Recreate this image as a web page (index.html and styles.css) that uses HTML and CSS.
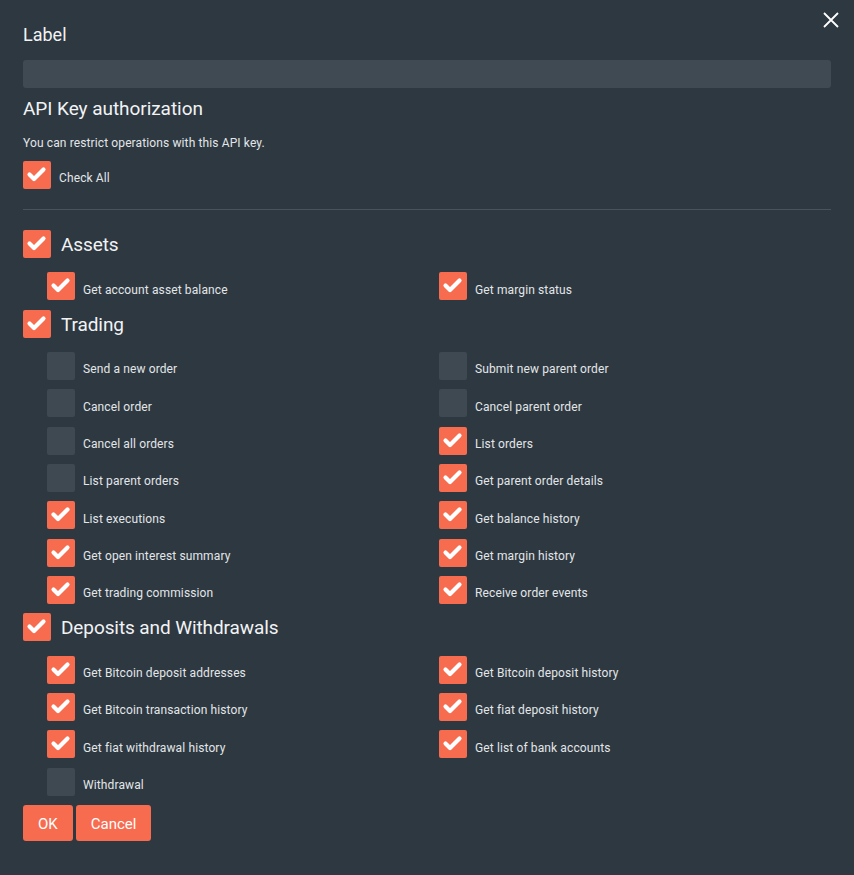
FILE: index.html
```html
<!DOCTYPE html>
<html>
<head>
<meta charset="utf-8">
<link rel="stylesheet" href="styles.css">
</head>
<body>
<div class="modal">
  <button class="close" aria-label="Close">
    <svg width="16" height="16" viewBox="0 0 16 16"><path d="M1 1 L15 15 M15 1 L1 15" stroke="#ffffff" stroke-width="1.8" fill="none"/></svg>
  </button>
  <div class="field-label">Label</div>
  <div class="input"></div>
  <h2 class="title">API Key authorization</h2>
  <p class="desc">You can restrict operations with this API key.</p>
  <label class="row check-all"><span class="box on"></span><span class="txt">Check All</span></label>
  <hr class="divider">

  <div class="section">
    <label class="row head"><span class="box on"></span><span class="htxt">Assets</span></label>
    <div class="items">
      <label class="row"><span class="box on"></span><span class="txt">Get account asset balance</span></label>
      <label class="row"><span class="box on"></span><span class="txt">Get margin status</span></label>
    </div>
  </div>

  <div class="section">
    <label class="row head"><span class="box on"></span><span class="htxt">Trading</span></label>
    <div class="items">
      <label class="row"><span class="box"></span><span class="txt">Send a new order</span></label>
      <label class="row"><span class="box"></span><span class="txt">Submit new parent order</span></label>
      <label class="row"><span class="box"></span><span class="txt">Cancel order</span></label>
      <label class="row"><span class="box"></span><span class="txt">Cancel parent order</span></label>
      <label class="row"><span class="box"></span><span class="txt">Cancel all orders</span></label>
      <label class="row"><span class="box on"></span><span class="txt">List orders</span></label>
      <label class="row"><span class="box"></span><span class="txt">List parent orders</span></label>
      <label class="row"><span class="box on"></span><span class="txt">Get parent order details</span></label>
      <label class="row"><span class="box on"></span><span class="txt">List executions</span></label>
      <label class="row"><span class="box on"></span><span class="txt">Get balance history</span></label>
      <label class="row"><span class="box on"></span><span class="txt">Get open interest summary</span></label>
      <label class="row"><span class="box on"></span><span class="txt">Get margin history</span></label>
      <label class="row"><span class="box on"></span><span class="txt">Get trading commission</span></label>
      <label class="row"><span class="box on"></span><span class="txt">Receive order events</span></label>
    </div>
  </div>

  <div class="section">
    <label class="row head"><span class="box on"></span><span class="htxt">Deposits and Withdrawals</span></label>
    <div class="items">
      <label class="row"><span class="box on"></span><span class="txt">Get Bitcoin deposit addresses</span></label>
      <label class="row"><span class="box on"></span><span class="txt">Get Bitcoin deposit history</span></label>
      <label class="row"><span class="box on"></span><span class="txt">Get Bitcoin transaction history</span></label>
      <label class="row"><span class="box on"></span><span class="txt">Get fiat deposit history</span></label>
      <label class="row"><span class="box on"></span><span class="txt">Get fiat withdrawal history</span></label>
      <label class="row"><span class="box on"></span><span class="txt">Get list of bank accounts</span></label>
      <label class="row"><span class="box"></span><span class="txt">Withdrawal</span></label>
    </div>
  </div>

  <div class="actions">
    <button class="btn">OK</button>
    <button class="btn">Cancel</button>
  </div>
</div>
</body>
</html>
```
FILE: styles.css
```css
* { box-sizing: border-box; }
html, body {
  margin: 0;
  padding: 0;
  background: #2d3841;
  height: 100%;
}
body {
  font-family: Roboto, "Liberation Sans", sans-serif;
  color: #e9ebec;
}
.modal {
  position: relative;
  padding: 23px 23px 0 23px;
}
.close {
  position: absolute;
  top: 12px;
  right: 15px;
  width: 16px;
  height: 16px;
  padding: 0;
  border: 0;
  background: transparent;
  display: block;
}
.close svg { display: block; }
.field-label {
  font-size: 18px;
  line-height: 24px;
  color: #f2f3f4;
}
.input {
  margin-top: 13px;
  height: 28px;
  background: #3f4a52;
  border-radius: 3px;
}
.title {
  margin: 8px 0 0 0;
  font-size: 19px;
  line-height: 26px;
  font-weight: 400;
  color: #f2f3f4;
  letter-spacing: -0.05px;
}
.desc {
  margin: 13px 0 0 0;
  font-size: 12px;
  line-height: 16px;
  letter-spacing: 0.12px;
  color: #e3e6e8;
}
.row {
  display: flex;
  align-items: center;
  height: 28px;
}
.check-all { margin-top: 10px; }
.check-all .txt { padding-top: 5px; }
.box {
  width: 28px;
  height: 28px;
  flex: 0 0 28px;
  border-radius: 2px;
  background: #3e4951;
}
.box.on {
  background: #f76b4f url("data:image/svg+xml;utf8,<svg xmlns='http://www.w3.org/2000/svg' width='28' height='28' viewBox='0 0 28 28'><polyline points='6.5,13.5 11,18 20.5,8.5' fill='none' stroke='white' stroke-width='4.2' stroke-linecap='round' stroke-linejoin='round'/></svg>") no-repeat center;
}
.txt {
  margin-left: 8px;
  font-size: 12px;
  line-height: 16px;
  letter-spacing: 0.12px;
  padding-top: 7px;
  color: #e3e6e8;
}
.divider {
  margin: 20px 0 0 0;
  border: 0;
  height: 1px;
  background: #48535b;
}
.section { margin-top: 9.33px; }
.divider + .section { margin-top: 20px; }
.htxt {
  margin-left: 10px;
  font-size: 19px;
  line-height: 26px;
  padding-top: 2px;
  letter-spacing: -0.1px;
  color: #f2f3f4;
}
.items {
  margin-top: 14.33px;
  padding-left: 24px;
  display: grid;
  grid-template-columns: 1fr 1fr;
  row-gap: 9.33px;
}
.actions {
  margin-top: 9.33px;
  display: flex;
  gap: 3px;
}
.btn {
  height: 36px;
  padding: 2px 15px 0 15px;
  border: 0;
  border-radius: 3px;
  background: #f76b4f;
  color: #ffffff;
  font-family: Roboto, "Liberation Sans", sans-serif;
  font-size: 15px;
}
```
